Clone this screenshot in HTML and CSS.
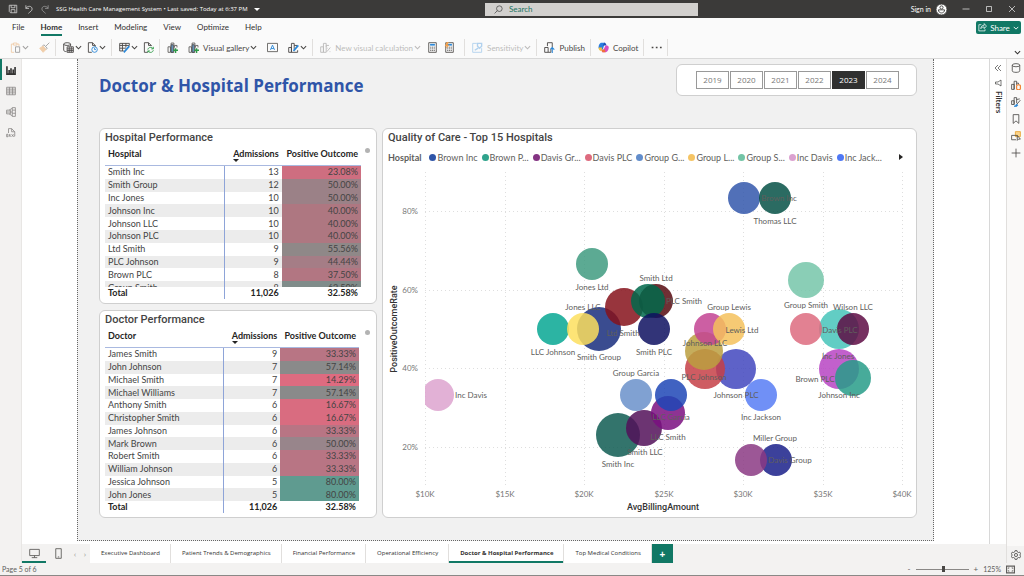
FILE: index.html
```html
<!DOCTYPE html>
<html lang="en">
<head>
    <meta charset="UTF-8">
    <meta name="viewport" content="width=device-width, initial-scale=1.0">
    <title>SSG Health Care Management System</title>
    <link rel="stylesheet" href="styles.css">
</head>
<body>
    <svg width="0" height="0" class="defs" aria-hidden="true">
        <symbol id="chev" viewBox="0 0 8 8"><path d="M1 2.5l3 3 3-3" fill="none" stroke="currentColor" stroke-width="1.2"/></symbol>
        <symbol id="bars" viewBox="0 0 16 16"><path d="M1.500 15V7h3.500v8zM6 15V1.500h4V15zM11 8V5h3.500v3" fill="none" stroke="#605e5c" stroke-width="1.300"/><path d="M6 4h3v11H6z" fill="#71afe5"/></symbol>
        <symbol id="calc" viewBox="0 0 16 16"><path d="M2.500 1h11v14h-11z" fill="#fff" stroke="#605e5c" stroke-width="1.400"/><path d="M4.500 4h7" stroke="#2b88d8" stroke-width="2.500"/><path d="M4.500 7.500h7M4.500 10h7M4.500 12.500h7" stroke="#605e5c" stroke-width="1.300" stroke-dasharray="1.800 .8"/></symbol>
    </svg>

    <header class="titlebar">
        <div class="title-left">
            <button aria-label="Save"><svg viewBox="0 0 16 16"><path d="M2 2h12v12H4l-2-2zM5 2v4h6V2M5 14V9h6v5"/></svg></button>
            <button aria-label="Undo"><svg viewBox="0 0 16 16"><path d="M3 2v5h5M3 7c3-5 10-4 10 1 0 3-3 4-6 7"/></svg></button>
            <button aria-label="Redo" class="dim"><svg viewBox="0 0 16 16"><path d="M13 2v5H8M13 7C10 2 3 3 3 8c0 3 3 4 6 7"/></svg></button>
            <span class="file-name">SSG Health Care Management System • Last saved: Today at 6:37 PM</span>
            <span class="caret"></span>
        </div>
        <label class="search">
            <svg viewBox="0 0 16 16"><circle cx="9.500" cy="6.500" r="5"/><path d="M6 10l-5 5"/></svg>
            <input type="text" placeholder="Search" aria-label="Search">
        </label>
        <div class="title-right">
            <a href="#">Sign in</a>
            <svg class="avatar" viewBox="0 0 16 16"><circle cx="8" cy="8" r="8" fill="#fff"/><circle cx="8" cy="5" r="2.300"/><path d="M3.500 8.500h9c0 6-9 6-9 0z"/></svg>
            <button aria-label="Minimize"><svg viewBox="0 0 16 16"><path d="M1 8h14"/></svg></button>
            <button aria-label="Maximize"><svg viewBox="0 0 16 16"><path d="M3 3h10v10H3z"/></svg></button>
            <button aria-label="Close"><svg viewBox="0 0 16 16"><path d="M2 2l12 12M14 2L2 14"/></svg></button>
        </div>
    </header>

    <nav class="menu">
        <a href="#">File</a>
        <a href="#" class="active">Home</a>
        <a href="#">Insert</a>
        <a href="#">Modeling</a>
        <a href="#">View</a>
        <a href="#">Optimize</a>
        <a href="#">Help</a>
        <button class="share"><svg viewBox="0 0 16 16"><path d="M6 3H1.500v11h11V11M5 10c0-4 3-6 6-6V1l4 4.500L11 10V7C8 7 6 8 5 10z"/></svg>Share<svg class="chev"><use href="#chev"/></svg></button>
    </nav>

    <div class="ribbon">
        <div class="group clipboard">
            <button aria-label="Paste"><svg viewBox="0 0 16 16"><path d="M5 3H2v12h4M10 3h3v3M5 1.500h5v3H5z" stroke="#e8a35c"/><path d="M8 7h6v8H8z"/></svg><svg class="chev"><use href="#chev"/></svg></button>
            <button aria-label="Format painter"><svg viewBox="0 0 16 16"><path d="M15 1l-5 5M7 4l5 5-2 2-5-5z"/><path d="M6 6L1 9l5 6 4-4z" fill="#e8a35c" stroke="#e8a35c"/></svg></button>
        </div>
        <div class="group">
            <button aria-label="Get data"><svg viewBox="0 0 16 16"><ellipse cx="6" cy="3" rx="5" ry="2"/><path d="M1 3v9c0 1 2 2 4 2M11 3v3M6 7h9v8H6zM6 10h9M6 12.500h9M9 7v8M12 7v8"/></svg><svg class="chev"><use href="#chev"/></svg></button>
            <button aria-label="Recent sources"><svg viewBox="0 0 16 16"><path d="M7 15H2V1h6l4 4v2M8 1v4h4"/><circle cx="11" cy="11" r="4" stroke="#2b88d8"/><path d="M11 8.500V11h2" stroke="#2b88d8"/></svg><svg class="chev"><use href="#chev"/></svg></button>
        </div>
        <div class="group">
            <button aria-label="Transform data"><svg viewBox="0 0 16 16"><path d="M7 13H1V2h14v3M1 5h14M1 9h9M5 2v11M10 2v6"/><path d="M15 6l-7 8-1 1" stroke="#2b88d8" stroke-width="2.500"/></svg><svg class="chev"><use href="#chev"/></svg></button>
            <button aria-label="Refresh"><svg viewBox="0 0 16 16"><path d="M7 15H2V1h6l4 4v1M8 1v4h4"/><path d="M7 11c1-4 6-4 8-1M15 7v3h-3M15 12c-1 4-6 4-8 1M7 15v-2h3" stroke="#2e9b47"/></svg></button>
        </div>
        <div class="group visuals-group">
            <button aria-label="New visual"><svg viewBox="0 0 16 16"><use href="#bars"/><path d="M9 12h7M12.500 9v7" stroke="#2e9b47" stroke-width="2"/></svg></button>
            <button><svg viewBox="0 0 16 16"><use href="#bars"/><path d="M9 12h7M12.500 9v7" stroke="#2e9b47" stroke-width="2"/></svg>Visual gallery<svg class="chev"><use href="#chev"/></svg></button>
            <button aria-label="Text box"><svg viewBox="0 0 16 16"><path d="M.700 2h14.600v12H.700z" stroke="#605e5c"/><path d="M5 11.500l3-7 3 7M6 9.500h4" stroke="#2b88d8"/></svg></button>
            <button aria-label="Shapes"><svg viewBox="0 0 16 16"><path d="M1 15V8h4v7zM5 15V2h4v8M9 5h4v2M5 15h9v-3"/><path d="M15 5l-7 8" stroke="#2b88d8" stroke-width="2.500"/></svg><svg class="chev"><use href="#chev"/></svg></button>
        </div>
        <div class="group calc-group">
            <button class="off"><svg viewBox="0 0 16 16"><path d="M1 15V7h4v8zM5 15V2h4v13zM9 7V5h4M10 14l5-6M10 9h1M14 14h1"/></svg>New visual calculation<svg class="chev"><use href="#chev"/></svg></button>
            <button aria-label="New measure"><svg viewBox="0 0 16 16"><use href="#calc"/></svg></button>
            <button aria-label="Quick measure"><svg viewBox="0 0 16 16"><use href="#calc"/><path d="M4 0L1 6h3l-2 5 6-7H5l2-4z" fill="#f2a04c" stroke="none"/></svg></button>
        </div>
        <div class="group">
            <button class="off"><svg viewBox="0 0 16 16"><path d="M7 2H1v13h13V9" stroke="#2b88d8"/><path d="M8 2h6v4l-3 3-3-3zM4 12l5-3" stroke="#2b88d8" stroke-width="2"/></svg>Sensitivity<svg class="chev"><use href="#chev"/></svg></button>
        </div>
        <div class="group">
            <button><svg viewBox="0 0 16 16"><path d="M1 15V8h5v7zM6 15h4V10M5 6V1h7v7"/><path d="M12 16V8M9.500 10.500L12 8l3 3" stroke="#2b88d8" stroke-width="1.600"/></svg>Publish</button>
        </div>
        <div class="group">
            <button><svg viewBox="0 0 16 16"><path d="M5 1h5l-3 10H3c-4 0-2-10 2-10z" fill="#2b7de0" stroke="none"/><path d="M9 1c3 0 3 4 4 4H7z" fill="#1c4fb5" stroke="none"/><path d="M1 8h5l-1 5c-3 0-4-2-4-5z" fill="#f5c13c" stroke="none"/><path d="M11 5h2c5 0 2 10-2 10H6z" fill="#d84fc0" stroke="none"/><path d="M5 11h5l1 4H7c-1 0-2-2-2-4z" fill="#f0703c" stroke="none"/></svg>Copilot</button>
        </div>
        <div class="group">
            <button aria-label="More options"><svg viewBox="0 0 16 16"><path d="M1 8h2.500M7 8h2.500M13 8h2.500" stroke-width="2.500"/></svg></button>
        </div>
        <button class="collapse" aria-label="Collapse ribbon"><svg class="chev"><use href="#chev"/></svg></button>
    </div>

    <div class="workspace">
        <aside class="rail left">
            <button class="active" aria-label="Report view"><svg viewBox="0 0 16 16"><path d="M1.500 2v12.500h13V3M5 13V8M8 13V5M11.500 13V7" stroke-width="2.600"/></svg></button>
            <button aria-label="Table view"><svg viewBox="0 0 16 16"><path d="M1 2h14v12H1zM1 5h14M1 8h14M1 11h14M5.500 2v12M10.500 2v12"/></svg></button>
            <button aria-label="Model view"><svg viewBox="0 0 16 16"><path d="M10 1h5v14h-5zM10 5h5M10 10h5M1 5h6v6H1zM1 8h6M7 8h3M5 5l5-3M5 11l5 3"/></svg></button>
            <button aria-label="DAX query view"><svg viewBox="0 0 16 16"><path d="M4 8V1h5l5 5v7h-2M9 1v5h5M1 10h2v4H1zM5 14l1-4 1 4M9 10l3 4M12 10l-3 4"/></svg></button>
        </aside>

        <div class="center">
            <div class="stage">
                <main class="canvas">
                    <div class="page">
                        <div class="page-head">
                            <h1>Doctor &amp; Hospital Performance</h1>
                            <div class="card slicer">
                                <button>2019</button>
                                <button>2020</button>
                                <button>2021</button>
                                <button>2022</button>
                                <button class="selected">2023</button>
                                <button>2024</button>
                            </div>
                        </div>

                        <div class="visuals">
                            <section class="card table-card hospitals">
                                <h2>Hospital Performance</h2>
                                <div class="scroller">
                                    <table>
                                        <thead><tr><th>Hospital</th><th><span class="sorted">Admissions</span></th><th>Positive Outcome</th></tr></thead>
                                        <tbody id="hospitalRows"></tbody>
                                        <tfoot><tr><td>Total</td><td>11,026</td><td>32.58%</td></tr></tfoot>
                                    </table>
                                </div>
                            </section>

                            <section class="card table-card doctors">
                                <h2>Doctor Performance</h2>
                                <div class="scroller">
                                    <table>
                                        <thead><tr><th>Doctor</th><th><span class="sorted">Admissions</span></th><th>Positive Outcome</th></tr></thead>
                                        <tbody id="doctorRows"></tbody>
                                        <tfoot><tr><td>Total</td><td>11,026</td><td>32.58%</td></tr></tfoot>
                                    </table>
                                </div>
                            </section>

                            <section class="card chart-card">
                                <h2>Quality of Care - Top 15 Hospitals</h2>
                                <div class="legend">
                                    <b>Hospital</b>
                                    <ul id="legend"></ul>
                                    <button aria-label="Next"></button>
                                </div>
                                <svg id="chart" class="chart" viewBox="0 0 533 344" role="img" aria-label="Quality of care by hospital"></svg>
                            </section>
                        </div>
                    </div>
                </main>

                <aside class="filters">
                    <button aria-label="Expand filters"><svg viewBox="0 0 16 16"><path d="M8 2L2 8l6 6M14 2L8 8l6 6"/></svg></button>
                    <svg viewBox="0 0 16 16"><path d="M14 2v12L8 10H3V6h5z"/></svg>
                    <span>Filters</span>
                </aside>
            </div>

            <nav class="page-tabs">
                <button class="device active" aria-label="Desktop layout"><svg viewBox="0 0 16 16"><path d="M1 2h14v9H1zM8 11v3M4 14h8"/></svg></button>
                <button class="device" aria-label="Mobile layout"><svg viewBox="0 0 16 16"><path d="M4 1h8v14H4zM7 13h2"/></svg></button>
                <button class="step" aria-label="Previous page">‹</button>
                <button class="step" aria-label="Next page">›</button>
                <a href="#">Executive Dashboard</a>
                <a href="#">Patient Trends &amp; Demographics</a>
                <a href="#">Financial Performance</a>
                <a href="#">Operational Efficiency</a>
                <a href="#" class="active">Doctor &amp; Hospital Performance</a>
                <a href="#">Top Medical Conditions</a>
                <button class="add" aria-label="New page">+</button>
            </nav>
        </div>

        <aside class="rail right">
            <button aria-label="Data"><svg viewBox="0 0 16 16"><ellipse cx="8" cy="3.500" rx="6" ry="2.500"/><path d="M2 3.500v9c0 3.300 12 3.300 12 0v-9"/></svg></button>
            <button aria-label="Build"><svg viewBox="0 0 16 16"><path d="M1 15V7h4v8zM5 15V2h4v6M9 5h3v2"/><path d="M9 9v5c0 2 6 2 6 0V9c0-2-6-2-6 0z" stroke="#f07d2a" stroke-width="1.800"/></svg></button>
            <button aria-label="Format"><svg viewBox="0 0 16 16"><path d="M1 12V6h4v6zM5 12V1h4v9M15 5l-6 7M9 4l5-1"/><path d="M5 15c2 0 2-4 5-3 2 2-1 4-5 3z" fill="#2b88d8" stroke="#2b88d8"/></svg></button>
            <button aria-label="Bookmarks"><svg viewBox="0 0 16 16"><path d="M3.500 1h9v14L8 11l-4.500 4z"/></svg></button>
            <button aria-label="Selection"><svg viewBox="0 0 16 16"><path d="M7 1h8v8H7z" fill="#fbd48a" stroke="#e8a02c"/><path d="M8 14H1V7h9M10 7v8l2-2h3z"/></svg></button>
            <button aria-label="Add pane"><svg viewBox="0 0 16 16"><path d="M8 1v14M1 8h14"/></svg></button>
            <button class="gear" aria-label="Settings"><svg viewBox="0 0 16 16"><path d="M6.500 1h3l.5 2 2 1 2-.6 1.500 2.600L14 8l1.500 2-1.500 2.600-2-.6-2 1-.5 2h-3L6 13l-2-1-2 .6L.500 10 2 8 .500 6 2 3.400 4 4l2-1z"/><circle cx="8" cy="8" r="2.500"/></svg></button>
        </aside>
    </div>

    <footer class="status">
        <span>Page 5 of 6</span>
        <div class="zoom">
            <button aria-label="Zoom out">-</button>
            <input type="range" min="10" max="220" value="122" aria-label="Zoom">
            <button aria-label="Zoom in">+</button>
            <span>125%</span>
            <button aria-label="Fit to page"><svg viewBox="0 0 16 16"><path d="M1 2h14v12H1z" stroke-width="2"/><path d="M4 7V5h2M10 5h2v2M12 9v2h-2M6 11H4V9"/></svg></button>
        </div>
    </footer>

    <script>
        // name, admissions, positive outcome, cell colour
        const hospitals = [
            ['Smith Inc', 13, '23.08%', '#ce6e80'],
            ['Smith Group', 12, '50.00%', '#9b8187'],
            ['Inc Jones', 10, '50.00%', '#9b8187'],
            ['Johnson Inc', 10, '40.00%', '#ae7781'],
            ['Johnson LLC', 10, '40.00%', '#ae7781'],
            ['Johnson PLC', 10, '40.00%', '#ae7781'],
            ['Ltd Smith', 9, '55.56%', '#8f8888'],
            ['PLC Johnson', 9, '44.44%', '#a57d86'],
            ['Brown PLC', 8, '37.50%', '#b27682'],
            ['Group Smith', 8, '62.50%', '#808c8a']
        ];
        const doctors = [
            ['James Smith', 9, '33.33%', '#b87584'],
            ['John Johnson', 7, '57.14%', '#8a8a8a'],
            ['Michael Smith', 7, '14.29%', '#de6b80'],
            ['Michael Williams', 7, '57.14%', '#8a8a8a'],
            ['Anthony Smith', 6, '16.67%', '#d96c80'],
            ['Christopher Smith', 6, '16.67%', '#d96c80'],
            ['James Johnson', 6, '33.33%', '#b87584'],
            ['Mark Brown', 6, '50.00%', '#98858b'],
            ['Robert Smith', 6, '33.33%', '#b87584'],
            ['William Johnson', 6, '33.33%', '#b87584'],
            ['Jessica Johnson', 5, '80.00%', '#5f9b90'],
            ['John Jones', 5, '80.00%', '#5f9b90']
        ];

        function fillRows(id, rows) {
            document.getElementById(id).innerHTML = rows.map(r =>
                `<tr><td>${r[0]}</td><td>${r[1]}</td><td style="background:${r[3]}">${r[2]}</td></tr>`
            ).join('');
        }
        fillRows('hospitalRows', hospitals);
        fillRows('doctorRows', doctors);

        // Legend
        const legend = [
            ['Brown Inc', '#2f55a8'], ['Brown P...', '#2fa38c'], ['Davis Gr...', '#843483'],
            ['Davis PLC', '#dd6b7f'], ['Group G...', '#628dcb'], ['Group L...', '#f5c464'],
            ['Group S...', '#73c4a6'], ['Inc Davis', '#dba2d0'], ['Inc Jack...', '#4f78f5']
        ];
        document.getElementById('legend').innerHTML = legend.map(l =>
            `<li><i style="background:${l[1]}"></i>${l[0]}</li>`
        ).join('');

        // Bubbles, back to front: x, y, radius, colour
        const bubbles = [
            [235, 263, 22, '#0f5c52'], [216, 157, 22, '#182d7c'], [456, 157, 20, '#46c4ba'],
            [456, 197, 20, '#b744c3'], [353, 197, 20, '#4247be'], [322, 197, 20, '#c63f46'],
            [241, 135, 19, '#86121b'], [321, 179, 19, '#bb9f3f'], [423, 108, 18, '#75c6a9'],
            [261, 256, 18, '#521059'], [470, 206, 18, '#279c88'], [273, 129, 17, '#570a10'],
            [265, 129, 17, '#00694b'], [285, 241, 17, '#7a0f80'], [209, 92, 16, '#3f9b80'],
            [170, 157, 16, '#07a793'], [200, 157, 16, '#fddf5e'], [271, 157, 16, '#0e1160'],
            [253, 223, 16, '#6a90ca'], [288, 223, 16, '#1e47b6'], [55, 223, 16, '#dda3cf'],
            [361, 26, 16, '#3257ab'], [392, 26, 16, '#065146'], [423, 157, 16, '#dd6b7f'],
            [470, 157, 16, '#5e0c44'], [327, 157, 16, '#c34393'], [346, 157, 16, '#f5c15c'],
            [378, 223, 16, '#577cf5'], [393, 288, 16, '#1a2089'], [368, 288, 16, '#8b3a84']
        ];
        // Data labels: text, centre x, centre y
        const labels = [
            ['Brown Inc', 396, 26], ['Thomas LLC', 392, 49], ['Jones Ltd', 209, 115], ['Smith Ltd', 273, 106],
            ['Jones LLC', 200, 135], ['Ltd Smith', 240, 161], ['PLC Smith', 301, 129], ['Group Lewis', 346, 135],
            ['Lewis Ltd', 359, 158], ['Johnson LLC', 322, 171], ['PLC Johnson', 321, 205], ['Johnson PLC', 353, 223],
            ['Inc Jackson', 378, 245], ['Smith PLC', 271, 180], ['LLC Johnson', 170, 180], ['Smith Group', 216, 185],
            ['Group Garcia', 253, 201], ['LLC Garcia', 288, 245], ['LLC Smith', 285, 265], ['Smith LLC', 262, 280],
            ['Smith Inc', 235, 292], ['Inc Davis', 88, 223], ['Group Smith', 423, 133], ['Wilson LLC', 470, 135],
            ['Davis PLC', 457, 158], ['Inc Jones', 455, 184], ['Brown PLC', 432, 207], ['Johnson Inc', 456, 223],
            ['Miller Group', 392, 266], ['Davis Group', 407, 288]
        ];

        let svg = '<defs><clipPath id="plot"><rect x="42" y="0" width="480" height="315"/></clipPath></defs>';
        ['80%', '60%', '40%', '20%'].forEach((t, i) => {
            const y = Math.round(39 + i * 78.7);
            svg += `<path class="grid" d="M42 ${y}.5H519"/><text class="tick" x="35" y="${y + 3}" text-anchor="end">${t}</text>`;
        });
        for (let k = 10; k <= 40; k += 5) {
            const x = Math.round(42 + (k - 10) * 15.9);
            svg += `<path class="grid" d="M${x}.5 0V315"/><text class="tick" x="${x}" y="325" text-anchor="middle">$${k}K</text>`;
        }
        svg += '<g clip-path="url(#plot)">' + bubbles.map(b =>
            `<circle cx="${b[0]}" cy="${b[1]}" r="${b[2]}" fill="${b[3]}"/>`).join('') + '</g>';
        svg += labels.map(l => `<text class="label" x="${l[1]}" y="${l[2] + 3}" text-anchor="middle">${l[0]}</text>`).join('');
        svg += '<text class="axis" x="280" y="338" text-anchor="middle">AvgBillingAmount</text>';
        svg += '<text class="axis" transform="translate(14 157) rotate(-90)" text-anchor="middle">PositiveOutcomeRate</text>';
        document.getElementById('chart').innerHTML = svg;
    </script>
</body>
</html>
```
FILE: styles.css
```css
* {
    box-sizing: border-box;
}

body {
    margin: 0;
    min-height: 100vh;
    display: flex;
    flex-direction: column;
    font-family: Lato, "Open Sans", sans-serif;
    font-size: 8px;
    color: #323130;
    background-color: #fff;
}

button, input {
    font: inherit;
    color: inherit;
    border: none;
    background: none;
    padding: 0;
    margin: 0;
}

a {
    color: inherit;
    text-decoration: none;
}

svg {
    width: 11px;
    height: 11px;
    fill: none;
    stroke: currentColor;
    stroke-width: 1.3;
    flex: none;
}

.defs {
    position: absolute;
    width: 0;
    height: 0;
}

.chev {
    width: 7px;
    height: 7px;
}

/* title bar */
.titlebar {
    height: 18px;
    display: grid;
    grid-template-columns: 485fr 213fr 326fr;
    align-items: center;
    background-color: #3b3a39;
    color: #fff;
}

.titlebar button {
    display: flex;
}

.title-left {
    display: flex;
    align-items: center;
    padding-left: 8px;
    gap: 6px;
    white-space: nowrap;
}

.title-left svg {
    width: 10px;
    height: 10px;
    stroke: #d0d0d0;
}

.title-left .dim svg {
    stroke: #999;
}

.file-name {
    font-family: "Open Sans", sans-serif;
    font-size: 6px;
    line-height: 9px;
}

.caret {
    border: 3px solid transparent;
    border-top-color: #fff;
    border-bottom: none;
}

.search {
    display: flex;
    align-items: center;
    gap: 6px;
    height: 13px;
    padding-left: 9px;
    background-color: #d2d0ce;
    color: #444;
}

.search svg {
    width: 9px;
    height: 9px;
}

.search input {
    flex: 1;
    min-width: 0;
    outline: none;
}

.search input::placeholder {
    color: #217463;
    opacity: 1;
}

.title-right {
    display: flex;
    justify-content: flex-end;
    align-items: center;
    padding-right: 8px;
}

.title-right a {
    font-size: 7px;
    margin-right: 5px;
}

.title-right svg {
    width: 8px;
    height: 8px;
}

.title-right .avatar {
    width: 11px;
    height: 11px;
    color: #3b3a39;
}

.title-right button {
    margin-left: 15px;
}

/* menu tabs */
.menu {
    height: 19px;
    display: flex;
    align-items: center;
    gap: 16px;
    padding: 0 3px 0 12px;
    background-color: #fafafa;
}

.menu a {
    height: 17px;
    line-height: 17px;
    border-bottom: 2px solid transparent;
}

.menu a.active {
    font-weight: bold;
    border-bottom-color: #117865;
}

.share {
    display: flex;
    align-items: center;
    justify-content: center;
    gap: 3px;
    width: 45px;
    height: 13px;
    margin-left: auto;
    border-radius: 2px;
    background-color: #117865;
    color: #fff;
}

.share svg {
    width: 9px;
    height: 9px;
}

.share .chev {
    width: 6px;
    height: 6px;
}

/* ribbon */
.ribbon {
    height: 22px;
    display: flex;
    align-items: center;
    padding: 0 3px;
    background-color: #fafafa;
    border-bottom: 1px solid #d8d8d8;
    white-space: nowrap;
}

.group {
    height: 17px;
    display: flex;
    align-items: center;
    gap: 5px;
    padding: 0 5px 0 7px;
    border-right: 1px solid #e1dfdd;
}

.group button {
    display: flex;
    align-items: center;
    gap: 4px;
    color: #484644;
}

.group button .chev {
    margin-left: -3px;
}

.clipboard {
    gap: 10px;
}

.clipboard button {
    opacity: 0.5;
}

.visuals-group {
    gap: 10px;
}

.calc-group {
    gap: 6px;
    padding-right: 9px;
}

.off {
    opacity: 0.35;
}

.collapse {
    margin-left: auto;
    align-self: flex-end;
}

/* workspace */
.workspace {
    flex: 1;
    display: flex;
}

.center {
    flex: 1;
    min-width: 0;
    display: flex;
    flex-direction: column;
}

.stage {
    flex: 1;
    display: flex;
}

.rail {
    display: flex;
    flex-direction: column;
    background-color: #f3f2f1;
}

.rail button {
    display: flex;
    align-items: center;
    justify-content: center;
    color: #8a8886;
}

.rail.left {
    width: 22px;
    border-right: 1px solid #e8e6e4;
}

.rail.left button {
    height: 21px;
    padding-right: 2px;
    border-left: 2px solid transparent;
}

.rail.left svg {
    width: 10px;
    height: 10px;
}

.rail.left .active {
    border-left-color: #117865;
    color: #323130;
}

.rail.right {
    width: 18px;
    background-color: #faf9f8;
    border-left: 1px solid #e1dfdd;
}

.rail.right button {
    height: 17px;
    color: #484644;
}

.rail.right svg {
    width: 10px;
    height: 10px;
}

.rail.right .gear {
    margin-top: auto;
    background-color: #f3f2f1;
}

.filters {
    width: 17px;
    display: flex;
    flex-direction: column;
    align-items: center;
    gap: 7px;
    padding-top: 5px;
    border-left: 1px solid #d8d8d8;
}

.filters button {
    display: flex;
}

.filters svg {
    width: 8px;
    height: 8px;
}

.filters span {
    writing-mode: vertical-rl;
    font-weight: bold;
    line-height: 9px;
    margin-top: -3px;
}

.canvas {
    flex: 1;
    min-width: 0;
    display: flex;
    padding: 0 55px 3px;
}

.page {
    flex: 1;
    min-width: 0;
    display: flex;
    flex-direction: column;
    padding: 5px 16px 22px 21px;
    background-color: #f1f1f1;
    border: 1px dotted #666;
    border-top: none;
}

.page-head {
    display: flex;
    justify-content: space-between;
    margin-bottom: 32px;
}

h1 {
    margin: 12px 0 0;
    font-family: "Open Sans", sans-serif;
    font-size: 17px;
    line-height: 20px;
    color: #2f55a8;
}

.card {
    background-color: #fff;
    border: 1px solid #cfcfcf;
    border-radius: 6px;
}

.slicer {
    display: flex;
    align-items: center;
    gap: 1px;
    height: 32px;
    padding: 0 17px 0 19px;
}

.slicer button {
    width: 33px;
    height: 18px;
    border: 1px solid #999;
    font-family: "Open Sans", sans-serif;
    font-size: 8px;
    line-height: 14px;
    color: #777;
}

.slicer .selected {
    background-color: #303030;
    border-color: #303030;
    color: #fff;
}

.visuals {
    flex: 1;
    display: grid;
    grid-template-columns: 278fr 535fr;
    grid-template-rows: 176fr 208fr;
    gap: 6px 5px;
}

h2 {
    margin: 0;
    font-family: Roboto, sans-serif;
    font-size: 11px;
    font-weight: 500;
    line-height: 17px;
    color: #444;
}

/* tables */
.table-card {
    position: relative;
    padding: 0 15px 3px 5px;
    min-width: 0;
}

.doctors {
    padding-right: 17px;
}

.table-card::after {
    content: "";
    position: absolute;
    top: 19px;
    right: 6px;
    width: 5px;
    height: 5px;
    border-radius: 50%;
    background-color: #b3b3b3;
}

.scroller {
    height: 153px;
    overflow: hidden;
}

.doctors .scroller {
    height: 185px;
}

table {
    width: 100%;
    height: 160px;
    table-layout: fixed;
    border-collapse: separate;
    border-spacing: 0;
    font-size: 9px;
    line-height: 12px;
    color: #444;
}

.doctors table {
    height: 185px;
}

th, td {
    padding: 0 3px;
    text-align: right;
    white-space: nowrap;
}

th:first-child, td:first-child {
    width: 47%;
    text-align: left;
}

th:nth-child(2) {
    width: 22%;
}

td:first-child {
    border-right: 1px solid #8ea4d8;
}

th {
    height: 20px;
    padding-bottom: 4px;
    color: #252423;
    border-bottom: 1px solid #a9b9e0;
}

.sorted {
    position: relative;
}

.sorted::after {
    content: "";
    position: absolute;
    left: 0;
    top: 11px;
    border: 3px solid transparent;
    border-top-color: #252423;
    border-bottom: none;
}

tbody tr:nth-child(even) {
    background-color: #ececec;
}

tfoot td {
    position: sticky;
    bottom: 0;
    background-color: #fff;
    font-weight: bold;
    color: #252423;
}

/* chart */
.chart-card {
    grid-column: 2;
    grid-row: 1 / 3;
    min-width: 0;
}

.chart-card h2 {
    padding-left: 5px;
}

.legend {
    display: flex;
    align-items: center;
    height: 22px;
    margin-bottom: 4px;
    padding: 0 13px 0 5px;
    font-size: 9px;
    color: #605e5c;
}

.legend ul {
    display: flex;
    flex: 1;
    gap: 4px;
    margin: 0;
    padding: 0 0 0 8px;
    list-style: none;
}

.legend li {
    display: flex;
    align-items: center;
    gap: 1px;
    white-space: nowrap;
}

.legend i {
    width: 7px;
    height: 7px;
    border-radius: 50%;
}

.legend button {
    border: 3px solid transparent;
    border-left: 4px solid #252423;
    border-right: none;
}

.chart {
    display: block;
    width: 100%;
    height: auto;
    stroke: none;
}

.chart circle {
    fill-opacity: 0.85;
}

.chart .grid {
    stroke: #dedede;
    stroke-width: 1;
    stroke-dasharray: 1 3;
}

.chart text {
    font-size: 8px;
    fill: #605e5c;
}

.chart .tick {
    fill: #777;
}

.chart .axis {
    font-family: Roboto, sans-serif;
    font-size: 9px;
    font-weight: 500;
    fill: #333;
}

/* page tabs */
.page-tabs {
    height: 19px;
    display: flex;
    background-color: #f3f2f1;
    font-family: "Open Sans", sans-serif;
    font-size: 6px;
}

.page-tabs a {
    padding: 0 10px 0 11px;
    line-height: 19px;
    background-color: #fff;
    border-right: 1px solid #e1dfdd;
    white-space: nowrap;
}

.page-tabs a.active {
    font-weight: bold;
    box-shadow: inset 0 -2px #117865;
}

.page-tabs .device {
    width: 24px;
    display: flex;
    align-items: center;
    justify-content: center;
    color: #605e5c;
}

.page-tabs .device.active {
    box-shadow: inset 0 -2px #117865;
}

.page-tabs .step {
    width: 10px;
    color: #a19f9d;
    font-size: 8px;
}

.page-tabs .add {
    width: 21px;
    background-color: #117865;
    color: #fff;
    font-size: 10px;
    font-weight: bold;
}

/* status bar */
.status {
    height: 13px;
    display: flex;
    align-items: center;
    justify-content: space-between;
    padding: 0 9px 0 2px;
    background-color: #f3f2f1;
    border-bottom: 1px solid #8a8886;
    color: #605e5c;
    font-size: 7px;
    line-height: 9px;
}

.zoom {
    display: flex;
    align-items: center;
    gap: 5px;
}

.zoom button {
    display: flex;
    font-size: 8px;
    line-height: 8px;
}

.zoom svg {
    width: 9px;
    height: 9px;
}

.zoom input {
    appearance: none;
    width: 53px;
    height: 1px;
    background-color: #8a8886;
}

.zoom input::-webkit-slider-thumb {
    appearance: none;
    width: 3px;
    height: 6px;
    background-color: #484644;
}
```
